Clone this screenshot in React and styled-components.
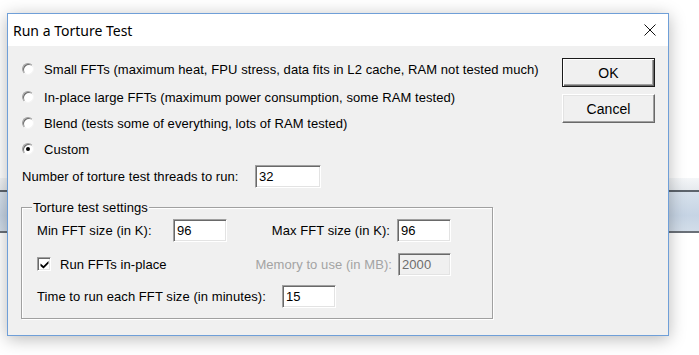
import React from "react";
import styled, { createGlobalStyle } from "styled-components";

const GlobalStyle = createGlobalStyle`
    html, body {
        margin: 0;
        padding: 0;
        background: #ffffff;
    }
`;

const Desktop = styled.div`
    position: relative;
    width: 699px;
    height: 355px;
    overflow: hidden;
    background: #ffffff;
    padding-top: 178px;
    box-sizing: border-box;
`;

// the app behind the dialog, only a strip of it shows
const BackBand = styled.div`
    height: 12px;
    background: linear-gradient(#f4f6f8, #e6eaee);
    border-bottom: 2px solid #5d646c;
`;

const BackBar = styled.div`
    height: 39px;
    background: linear-gradient(#d7e1ec, #c6d4e4 60%, #d2dde9);
    border-bottom: 2px solid #6a7078;
`;

const Window = styled.div`
    position: absolute;
    left: 7px;
    top: 13px;
    width: 662px;
    height: 323px;
    box-sizing: border-box;
    border: 1px solid #6f9fd8;
    background: #f0f0f0;
    box-shadow: 0 3px 16px rgba(0, 0, 0, 0.28);
    display: flex;
    flex-direction: column;
`;

const TitleBar = styled.div`
    height: 32px;
    background: #ffffff;
    display: flex;
    align-items: center;
    justify-content: space-between;
    padding: 0 12px 0 5px;
    flex-shrink: 0;
`;

const Title = styled.div`
    font-family: "Noto Sans", "Open Sans", sans-serif;
    font-size: 14px;
    color: #000;
`;

const CloseBtn = styled.div`
    width: 12px;
    height: 12px;
    display: flex;
`;

const Body = styled.div`
    flex: 1;
    display: flex;
    padding: 0 13px 0 14px;
    font-family: "Liberation Sans", Arial, sans-serif;
    font-size: 13px;
    letter-spacing: 0.07px;
    color: #000;
`;

const LeftCol = styled.div`
    flex: 1;
    display: flex;
    flex-direction: column;
    padding-top: 13px;
`;

const RightCol = styled.div`
    width: 93px;
    display: flex;
    flex-direction: column;
    gap: 7px;
    padding-top: 12px;
`;

const OptionRow = styled.label`
    display: flex;
    align-items: center;
    height: 20px;
    margin-bottom: ${(p) => p.$gap || 6}px;
    gap: 10px;
`;

const Radio = styled.span`
    width: 12px;
    height: 12px;
    border-radius: 50%;
    box-sizing: border-box;
    background: #fff;
    border: 1px solid;
    border-color: #a0a0a0 #f4f4f4 #f4f4f4 #a0a0a0;
    box-shadow: inset 1px 1px 0 #6b6b6b;
    display: flex;
    align-items: center;
    justify-content: center;
    flex-shrink: 0;

    &::after {
        content: "";
        width: 4px;
        height: 4px;
        border-radius: 50%;
        background: #000;
        display: ${(p) => (p.$checked ? "block" : "none")};
    }
`;

const FieldRow = styled.div`
    display: flex;
    align-items: center;
    height: 23px;
`;

const Label = styled.span`
    width: ${(p) => (p.$w ? `${p.$w}px` : "auto")};
    color: ${(p) => (p.$disabled ? "#a3a3a3" : "#000")};
    white-space: nowrap;
    flex-shrink: 0;
`;

const Input = styled.div`
    width: ${(p) => p.$w || 54}px;
    height: 23px;
    box-sizing: border-box;
    border: 1px solid;
    border-color: #a0a0a0 #ffffff #ffffff #a0a0a0;
    box-shadow: inset 1px 1px 0 #696969, inset -1px -1px 0 #e3e3e3;
    background: ${(p) => (p.$disabled ? "#f0f0f0" : "#ffffff")};
    color: ${(p) => (p.$disabled ? "#6d6d6d" : "#000")};
    display: flex;
    align-items: center;
    padding-left: 3px;
    flex-shrink: 0;
`;

const Group = styled.fieldset`
    width: 472px;
    box-sizing: border-box;
    margin: 12px 0 0 -1px;
    padding: 2px 0 10px 15px;
    border: 1px solid #a0a0a0;
    box-shadow: 1px 1px 0 #fff, inset 1px 1px 0 #fff;
    display: flex;
    flex-direction: column;
    gap: 8px;
`;

const Legend = styled.legend`
    padding: 0 1px;
    margin-left: -5px;
    background: #f0f0f0;
`;

const GroupRow = styled.div`
    display: grid;
    grid-template-columns: 190px 224px;
    align-items: center;
    height: 26px;
`;

const RightField = styled.div`
    display: flex;
    align-items: center;
    justify-content: flex-end;
    gap: ${(p) => p.$gap || 7}px;
`;

const LeftField = styled.div`
    display: flex;
    align-items: center;
`;

const CheckLabel = styled.label`
    display: flex;
    align-items: center;
    gap: 9px;
`;

const CheckBox = styled.span`
    width: 14px;
    height: 14px;
    box-sizing: border-box;
    background: #fff;
    border: 1px solid;
    border-color: #a0a0a0 #ffffff #ffffff #a0a0a0;
    box-shadow: inset 1px 1px 0 #696969, inset -1px -1px 0 #e3e3e3;
    display: flex;
    align-items: center;
    justify-content: center;
`;

const Button = styled.div`
    height: 29px;
    box-sizing: border-box;
    background: #f0f0f0;
    border: 1px solid ${(p) => (p.$default ? "#1a1a1a" : "#696969")};
    border-top-color: ${(p) => (p.$default ? "#1a1a1a" : "#ffffff")};
    border-left-color: ${(p) => (p.$default ? "#1a1a1a" : "#ffffff")};
    box-shadow: ${(p) =>
        p.$default
            ? "inset 1px 1px 0 #ffffff, inset -1px -1px 0 #696969, inset -2px -2px 0 #a0a0a0"
            : "inset -1px -1px 0 #a0a0a0, inset 1px 1px 0 #e3e3e3"};
    display: flex;
    align-items: center;
    justify-content: center;
    font-size: 14px;
`;

function App() {
    return (
        <>
            <GlobalStyle />
            <Desktop>
                <BackBand />
                <BackBar />
                <Window>
                    <TitleBar>
                        <Title>Run a Torture Test</Title>
                        <CloseBtn>
                            <svg width="12" height="12" viewBox="0 0 12 12">
                                <path d="M0.5 0.5 L11.5 11.5 M11.5 0.5 L0.5 11.5" stroke="#111" strokeWidth="1" />
                            </svg>
                        </CloseBtn>
                    </TitleBar>
                    <Body>
                        <LeftCol>
                            <OptionRow $gap={8}>
                                <Radio />
                                Small FFTs (maximum heat, FPU stress, data fits in L2 cache, RAM not tested much)
                            </OptionRow>
                            <OptionRow>
                                <Radio />
                                In-place large FFTs (maximum power consumption, some RAM tested)
                            </OptionRow>
                            <OptionRow>
                                <Radio />
                                Blend (tests some of everything, lots of RAM tested)
                            </OptionRow>
                            <OptionRow $gap={6}>
                                <Radio $checked />
                                Custom
                            </OptionRow>
                            <FieldRow>
                                <Label $w={233}>Number of torture test threads to run:</Label>
                                <Input $w={66}>32</Input>
                            </FieldRow>
                            <Group>
                                <Legend>Torture test settings</Legend>
                                <GroupRow>
                                    <LeftField>
                                        <Label $w={136}>Min FFT size (in K):</Label>
                                        <Input>96</Input>
                                    </LeftField>
                                    <RightField>
                                        <Label>Max FFT size (in K):</Label>
                                        <Input>96</Input>
                                    </RightField>
                                </GroupRow>
                                <GroupRow>
                                    <CheckLabel>
                                        <CheckBox>
                                            <svg width="9" height="9" viewBox="0 0 9 9">
                                                <path d="M0.5 3.5 L3.5 6 L8.5 1 L8.5 3.5 L3.5 8.5 L0.5 6 Z" fill="#000" />
                                            </svg>
                                        </CheckBox>
                                        Run FFTs in-place
                                    </CheckLabel>
                                    <RightField $gap={6}>
                                        <Label $disabled>Memory to use (in MB):</Label>
                                        <Input $w={53} $disabled>2000</Input>
                                    </RightField>
                                </GroupRow>
                                <FieldRow>
                                    <Label $w={245}>Time to run each FFT size (in minutes):</Label>
                                    <Input>15</Input>
                                </FieldRow>
                            </Group>
                        </LeftCol>
                        <RightCol>
                            <Button $default>OK</Button>
                            <Button>Cancel</Button>
                        </RightCol>
                    </Body>
                </Window>
            </Desktop>
        </>
    );
}

export default App;
